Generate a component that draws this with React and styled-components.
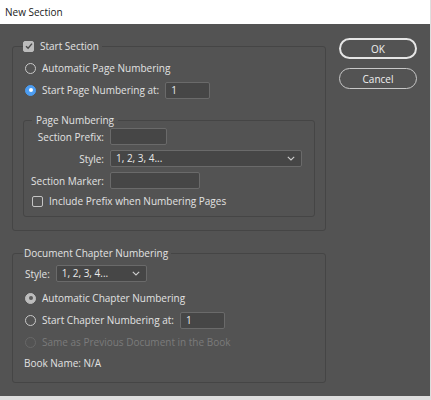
import React from "react";
import styled, { createGlobalStyle } from "styled-components";

const GlobalStyle = createGlobalStyle`
  * { box-sizing: border-box; }
  html, body {
    margin: 0;
    padding: 0;
    background: #dedede;
  }
  body {
    font-family: "Open Sans", "Noto Sans", sans-serif;
    font-size: 10px;
  }
`;

const Dialog = styled.div`
  width: 430px;
  height: 396px;
  background: #535353;
  display: flex;
  flex-direction: column;
`;

const TitleBar = styled.div`
  height: 24px;
  line-height: 25px;
  padding-left: 5px;
  background: #ffffff;
  color: #1a1a1a;
`;

const Body = styled.div`
  display: flex;
  gap: 13px;
  padding: 14px 0 0 12px;
`;

const Column = styled.div`
  width: 314px;
  display: flex;
  flex-direction: column;
`;

const Group = styled.fieldset`
  margin: ${(p) => p.$margin || "0"};
  padding: ${(p) => p.$pad};
  border: 1px solid #454545;
  border-radius: 3px;
  min-width: 0;
  color: #e2e2e2;
`;

const Legend = styled.legend`
  display: flex;
  align-items: center;
  gap: 6px;
  padding: ${(p) => p.$pad || "0 3px 0 0"};
  line-height: 16px;
  height: 16px;
  color: #e2e2e2;
`;

const Option = styled.div`
  display: flex;
  align-items: center;
  gap: ${(p) => p.$gap || 6}px;
  height: ${(p) => p.$h || 22}px;
  padding-left: ${(p) => p.$indent || 0}px;
  margin-top: ${(p) => p.$top || 0}px;
  color: ${(p) => (p.$disabled ? "#7b7b7b" : "#e2e2e2")};
  white-space: nowrap;
`;

const Radio = styled.span`
  width: 11px;
  height: 11px;
  border-radius: 50%;
  flex: none;
  display: flex;
  align-items: center;
  justify-content: center;
  border: 1px solid
    ${(p) =>
      p.$kind === "blue"
        ? "#4c9df2"
        : p.$kind === "gray"
        ? "#bdbdbd"
        : p.$kind === "off"
        ? "#686868"
        : "#c9c9c9"};
  background: ${(p) =>
    p.$kind === "blue" ? "#4c9df2" : p.$kind === "gray" ? "#bdbdbd" : "transparent"};

  &::after {
    content: "";
    display: ${(p) => (p.$kind === "blue" || p.$kind === "gray" ? "block" : "none")};
    width: 4px;
    height: 4px;
    border-radius: 50%;
    background: ${(p) => (p.$kind === "blue" ? "#ffffff" : "#5a5a5a")};
  }
`;

const Box = styled.span`
  width: 11px;
  height: 11px;
  flex: none;
  border-radius: 2px;
  display: flex;
  align-items: center;
  justify-content: center;
  border: 1px solid ${(p) => (p.$checked ? "#bcbcbc" : "#c4c4c4")};
  background: ${(p) => (p.$checked ? "#bcbcbc" : "transparent")};
`;

const Field = styled.div`
  width: ${(p) => p.$w}px;
  height: 17px;
  flex: none;
  padding: 0 5px;
  line-height: 15px;
  background: #464646;
  border: 1px solid #6a6a6a;
  border-radius: 2px;
  color: #eaeaea;
`;

const SelectField = styled(Field)`
  display: flex;
  align-items: center;
  justify-content: space-between;
  padding-right: 6px;
`;

const FormGrid = styled.div`
  display: grid;
  grid-template-columns: 72px auto;
  column-gap: 6px;
  row-gap: 5px;
  align-items: center;
  justify-items: start;
`;

const FieldLabel = styled.span`
  justify-self: end;
  white-space: nowrap;
  color: #e2e2e2;
`;

const Buttons = styled.div`
  width: 78px;
  display: flex;
  flex-direction: column;
  gap: 9px;
`;

const Button = styled.button`
  height: 21px;
  border-radius: 11px;
  background: transparent;
  border: ${(p) => (p.$primary ? "2px solid #e6e6e6" : "1px solid #c8c8c8")};
  color: #f0f0f0;
  font-family: inherit;
  font-size: 10px;
  padding: 0;
  cursor: pointer;
`;

const Check = () => (
  <svg width="8" height="8" viewBox="0 0 8 8">
    <path d="M1 4.2 L3.1 6.3 L7 1.6" fill="none" stroke="#4a4a4a" strokeWidth="1.4" />
  </svg>
);

const Chevron = () => (
  <svg width="8" height="5" viewBox="0 0 8 5">
    <path d="M0.8 0.8 L4 3.9 L7.2 0.8" fill="none" stroke="#cfcfcf" strokeWidth="1.1" />
  </svg>
);

const Select = ({ w, value }) => (
  <SelectField $w={w}>
    <span>{value}</span>
    <Chevron />
  </SelectField>
);

export default function App() {
  return (
    <>
      <GlobalStyle />
      <Dialog>
        <TitleBar>New Section</TitleBar>
        <Body>
          <Column>
            <Group $pad="3px 10px 13px 10px">
              <Legend>
                <Box $checked>
                  <Check />
                </Box>
                Start Section
              </Legend>
              <Option $indent={2}>
                <Radio />
                Automatic Page Numbering
              </Option>
              <Option $indent={2}>
                <Radio $kind="blue" />
                Start Page Numbering at:
                <Field $w={45}>1</Field>
              </Option>

              <Group $margin="11px 0 0 0" $pad="0 10px 7px 8px">
                <Legend $pad="0 4px">Page Numbering</Legend>
                <FormGrid>
                  <FieldLabel>Section Prefix:</FieldLabel>
                  <Field $w={57} />
                  <FieldLabel>Style:</FieldLabel>
                  <Select w={192} value="1, 2, 3, 4..." />
                  <FieldLabel>Section Marker:</FieldLabel>
                  <Field $w={90} />
                </FormGrid>
                <Option $h={16} $top={4}>
                  <Box />
                  Include Prefix when Numbering Pages
                </Option>
              </Group>
            </Group>

            <Group $margin="14px 0 0 0" $pad="4px 10px 9px 10px">
              <Legend $pad="0 3px 0 1px">Document Chapter Numbering</Legend>
              <Option $h={17} $indent={2} $gap={6}>
                Style:
                <Select w={91} value="1, 2, 3, 4..." />
              </Option>
              <Option $indent={2} $top={5}>
                <Radio $kind="gray" />
                Automatic Chapter Numbering
              </Option>
              <Option $indent={2}>
                <Radio />
                Start Chapter Numbering at:
                <Field $w={45}>1</Field>
              </Option>
              <Option $indent={2} $disabled>
                <Radio $kind="off" />
                Same as Previous Document in the Book
              </Option>
              <Option $h={20} $indent={1}>
                Book Name: N/A
              </Option>
            </Group>
          </Column>

          <Buttons>
            <Button $primary>OK</Button>
            <Button>Cancel</Button>
          </Buttons>
        </Body>
      </Dialog>
    </>
  );
}
